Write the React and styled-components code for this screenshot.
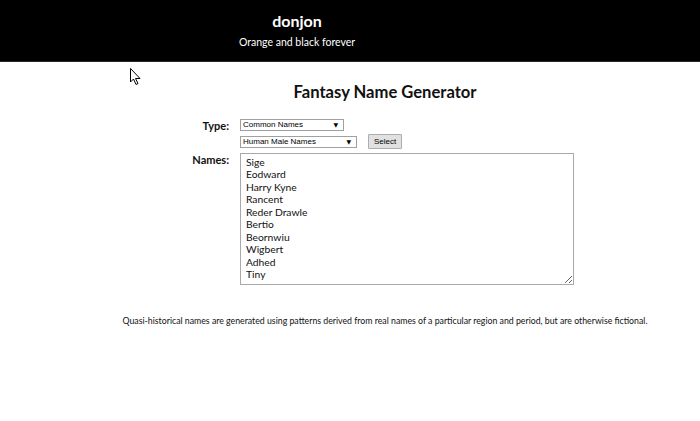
import React from 'react';
import styled, {createGlobalStyle} from 'styled-components';

const GlobalStyle = createGlobalStyle`
	html, body {
		margin: 0;
		padding: 0;
		background: #ffffff;
	}
	body {
		font-family: Lato, "Open Sans", sans-serif;
		color: #111111;
	}
`

const Page = styled.div`
	width: 700px;
	height: 421px;
	position: relative;
	overflow: hidden;
`

const Header = styled.header`
	height: 62px;
	background: #000000;
	border-bottom: 1px solid #2a2a2a;
	display: flex;
	flex-direction: column;
	align-items: center;
	padding-right: 106px;
	box-sizing: border-box;
	color: #ffffff;
`

const SiteName = styled.div`
	font-weight: 700;
	font-size: 16px;
	margin-top: 11px;
	line-height: 20px;
`

const Tagline = styled.div`
	font-size: 10.5px;
	margin-top: 4px;
	line-height: 14px;
`

const Main = styled.main`
	padding-left: 70px;
`

const Title = styled.h1`
	margin: 19px 0 0;
	font-size: 16.6px;
	font-weight: 700;
	line-height: 22px;
	text-align: center;
`

const Form = styled.div`
	display: grid;
	grid-template-columns: 159px auto;
	column-gap: 11px;
	row-gap: 4px;
	margin-top: 16px;
	align-items: start;
`

const Label = styled.div`
	text-align: right;
	font-weight: 700;
	font-size: 11px;
	line-height: 13px;
`

const Controls = styled.div`
	display: flex;
	flex-direction: column;
	gap: 3px;
`

const Row = styled.div`
	display: flex;
	align-items: center;
	gap: 11px;
	height: 15px;
`

const SelectBox = styled.div`
	position: relative;
	width: ${({$w}) => $w}px;
	height: 12px;
	flex: none;
`

const Select = styled.select`
	appearance: none;
	display: block;
	width: 100%;
	height: 12px;
	margin: 0;
	box-sizing: border-box;
	border: 1px solid #a0a0a0;
	border-radius: 0;
	background: #ffffff;
	font-family: "Liberation Sans", Arial, sans-serif;
	font-size: 8px;
	line-height: 10px;
	padding: 0 2px;
	color: #000000;
	outline: none;
`

const Arrow = styled.span`
	position: absolute;
	right: 6px;
	top: 1px;
	font-size: 6px;
	line-height: 10px;
	color: #000000;
	pointer-events: none;
	font-family: "DejaVu Sans", sans-serif;
`

const Button = styled.button`
	display: block;
	height: 15px;
	width: 34px;
	padding: 0;
	margin: 0;
	border: 1px solid #adadad;
	border-radius: 1px;
	background: #e1e1e1;
	font-family: "Liberation Sans", Arial, sans-serif;
	font-size: 8px;
	color: #000000;
`

const Names = styled.textarea`
	width: 334px;
	height: 132px;
	box-sizing: border-box;
	border: 1px solid #a9a9a9;
	padding: 2px 5px;
	margin: 0;
	font-family: Lato, "Open Sans", sans-serif;
	font-size: 10.3px;
	line-height: 12.45px;
	color: #111111;
	resize: both;
	outline: none;
	display: block;
`

const Note = styled.p`
	margin: 30px 0 0;
	text-align: center;
	font-size: 8.75px;
	line-height: 12px;
	color: #111111;
`

const Cursor = styled.svg`
	position: absolute;
	left: 130px;
	top: 68px;
`

const names = [
	'Sige',
	'Eodward',
	'Harry Kyne',
	'Rancent',
	'Reder Drawle',
	'Bertio',
	'Beornwiu',
	'Wigbert',
	'Adhed',
	'Tiny',
]

const App = () => {
	return (
		<Page>
			<GlobalStyle />
			<Header>
				<SiteName>donjon</SiteName>
				<Tagline>Orange and black forever</Tagline>
			</Header>
			<Main>
				<Title>Fantasy Name Generator</Title>
				<Form>
					<Label>Type:</Label>
					<Controls>
						<SelectBox $w={104}>
							<Select defaultValue="common">
								<option value="common">Common Names</option>
							</Select>
							<Arrow>▼</Arrow>
						</SelectBox>
						<Row>
							<SelectBox $w={117}>
								<Select defaultValue="human">
									<option value="human">Human Male Names</option>
								</Select>
								<Arrow>▼</Arrow>
							</SelectBox>
							<Button>Select</Button>
						</Row>
					</Controls>
					<Label>Names:</Label>
					<Names readOnly value={names.join('\n')} />
				</Form>
				<Note>
					Quasi-historical names are generated using patterns derived from real names of a particular region and period, but are otherwise fictional.
				</Note>
			</Main>
			<Cursor width="12" height="18" viewBox="0 0 12 18">
				<path d="M0.5 0.5 L0.5 14 L3.5 11 L6 16.5 L8 15.5 L5.5 10.5 L10 10.5 Z" fill="#ffffff" stroke="#000000" strokeWidth="1" />
			</Cursor>
		</Page>
	);
};

export default App;
